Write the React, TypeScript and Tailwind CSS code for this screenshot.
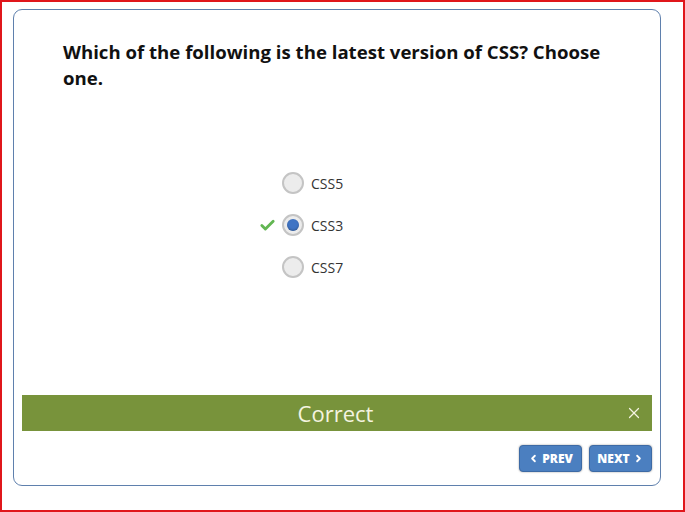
import { Check, ChevronLeft, ChevronRight, X } from "lucide-react";

const options = [
  { label: "CSS5", selected: false },
  { label: "CSS3", selected: true },
  { label: "CSS7", selected: false },
];

function Radio({ selected }: { selected: boolean }) {
  return (
    <div className="flex h-[22px] w-[22px] items-center justify-center rounded-full border-2 border-[#c4c4c4] bg-[#ececec]">
      {selected && <div className="h-[12px] w-[12px] rounded-full bg-[#3f74c4] shadow-[inset_0_-1px_2px_rgba(0,0,0,0.25)]" />}
    </div>
  );
}

export default function App() {
  return (
    <div
      className="h-[512px] w-[685px] border-2 border-[#e0161b] bg-white pt-[7px] pl-[11px]"
      style={{ fontFamily: '"Open Sans", "Liberation Sans", sans-serif' }}
    >
      <div className="flex h-[477px] w-[648px] flex-col rounded-[9px] border border-[#5f80ad] bg-white">
        <h1 className="px-[49px] pt-[29px] text-[18.6px] leading-[26px] font-bold text-[#111]">
          Which of the following is the latest version of CSS? Choose one.
        </h1>

        <div className="mt-[81px] flex flex-col gap-[20px] pl-[268px]">
          {options.map((o) => (
            <div key={o.label} className="relative flex items-center gap-[7px]">
              {o.selected && (
                <Check
                  className="absolute left-[-23px] text-[#62b652]"
                  size={17}
                  strokeWidth={4}
                />
              )}
              <Radio selected={o.selected} />
              <span className="text-[14px] text-[#333]">{o.label}</span>
            </div>
          ))}
        </div>

        <div className="mt-auto ml-[8px] flex h-[36px] w-[630px] items-center justify-center bg-[#78933b]">
          <span className="flex-1 pl-[24px] text-center text-[22px] text-[#f4f4e0]">Correct</span>
          <X className="mr-[9px] text-[#f4f4e0]" size={18} strokeWidth={1.6} />
        </div>

        <div className="flex justify-end gap-[7px] pt-[14px] pr-[8px] pb-[13px]">
          <button className="flex h-[27px] w-[63px] items-center justify-center gap-[3px] rounded-[4px] border border-[#3d6aa5] bg-[#4b7fc0] text-[12px] font-extrabold text-white shadow-[0_0_2px_rgba(0,0,0,0.4)]">
            <ChevronLeft size={11} strokeWidth={4} />
            PREV
          </button>
          <button className="flex h-[27px] w-[63px] items-center justify-center gap-[3px] rounded-[4px] border border-[#3d6aa5] bg-[#4b7fc0] text-[12px] font-extrabold text-white shadow-[0_0_2px_rgba(0,0,0,0.4)]">
            NEXT
            <ChevronRight size={11} strokeWidth={4} />
          </button>
        </div>
      </div>
    </div>
  );
}
